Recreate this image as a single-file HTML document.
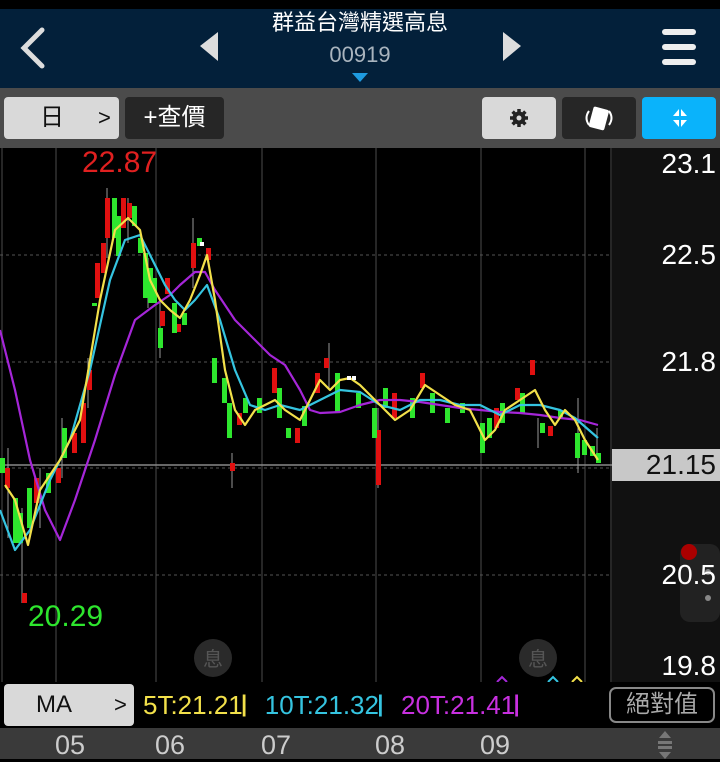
<!DOCTYPE html>
<html><head><meta charset="utf-8"><style>
*{margin:0;padding:0;box-sizing:border-box}
body{width:720px;height:759px;background:#000;overflow:hidden;font-family:"Liberation Sans","Noto Sans CJK TC",sans-serif;position:relative}
.abs{position:absolute}
</style></head><body>
<div class="abs" style="left:0;top:0;width:720px;height:9px;background:#000"></div>
<div class="abs" style="left:0;top:9px;width:720px;height:79px;background:#03203a"></div>
<svg class="abs" style="left:0;top:0" width="720" height="90">
<polyline points="42,30 24,48 42,66" fill="none" stroke="#ddd" stroke-width="5" stroke-linecap="round"/>
<polygon points="218,32 218,61 200,46" fill="#ddd"/>
<polygon points="503,32 503,61 521,46" fill="#ddd"/>
<rect x="662" y="29" width="34" height="6" rx="3" fill="#eee"/>
<rect x="662" y="44" width="34" height="6" rx="3" fill="#eee"/>
<rect x="662" y="59" width="34" height="6" rx="3" fill="#eee"/>
<polygon points="352,73 368,73 360,82" fill="#1e9be0"/>
</svg>
<div class="abs" style="left:0;top:9px;width:720px;text-align:center;font-size:22px;color:#fff;line-height:28px">群益台灣精選高息</div>
<div class="abs" style="left:0;top:41px;width:720px;text-align:center;font-size:22px;color:#a9b4be;line-height:28px">00919</div>
<div class="abs" style="left:0;top:88px;width:720px;height:60px;background:#4b4b4b"></div>
<div class="abs" style="left:4px;top:97px;width:115px;height:42px;background:#d9d9d9;border-radius:4px;font-size:24px;line-height:42px;color:#111"><span style="position:absolute;left:36px">日</span><span style="position:absolute;left:94px;font-size:22px">&gt;</span></div>
<div class="abs" style="left:125px;top:97px;width:99px;height:42px;background:#262626;border-radius:4px;font-size:24px;line-height:42px;color:#fff;text-align:center">+查價</div>
<div class="abs" style="left:482px;top:97px;width:74px;height:42px;background:#d9d9d9;border-radius:4px"></div>
<svg class="abs" style="left:482px;top:97px" width="74" height="42"><g fill="#222"><circle cx="37" cy="21" r="6.5"/><g stroke="#222" stroke-width="3.5"><line x1="37" y1="12" x2="37" y2="30"/><line x1="28" y1="21" x2="46" y2="21"/><line x1="30.6" y1="14.6" x2="43.4" y2="27.4"/><line x1="43.4" y1="14.6" x2="30.6" y2="27.4"/></g></g><circle cx="37" cy="21" r="2.5" fill="#d9d9d9"/></svg>
<div class="abs" style="left:562px;top:97px;width:74px;height:42px;background:#262626;border-radius:4px"></div>
<svg class="abs" style="left:562px;top:97px" width="74" height="42"><rect x="29" y="11" width="16" height="21" rx="2" fill="#fff" transform="rotate(15 37 21)"/><path d="M27 14 Q22 21 27 28" stroke="#fff" stroke-width="2" fill="none"/><path d="M47 14 Q52 21 47 28" stroke="#fff" stroke-width="2" fill="none"/></svg>
<div class="abs" style="left:642px;top:97px;width:74px;height:42px;background:#0ab3fb;border-radius:4px"></div>
<svg class="abs" style="left:642px;top:97px" width="74" height="42"><polygon points="31,19 37,12 37,19" fill="#fff"/><polygon points="39,12 45,19 39,19" fill="#fff"/><polygon points="31,23 37,23 37,30" fill="#fff"/><polygon points="39,23 45,23 39,30" fill="#fff"/></svg>
<!-- chart -->
<div class="abs" style="left:612px;top:148px;width:108px;height:534px;background:#111"></div>
<svg class="abs" style="left:0;top:148px" width="720" height="534">
<g stroke="#333" stroke-width="1.5">
<line x1="2" y1="0" x2="2" y2="534"/><line x1="56" y1="0" x2="56" y2="534"/><line x1="156" y1="0" x2="156" y2="534"/><line x1="262" y1="0" x2="262" y2="534"/><line x1="376" y1="0" x2="376" y2="534"/><line x1="481" y1="0" x2="481" y2="534"/><line x1="585" y1="0" x2="585" y2="534"/><line x1="611" y1="0" x2="611" y2="534"/>
</g>
<g stroke="#555" stroke-dasharray="3,3"><line x1="0" y1="107" x2="611" y2="107"/><line x1="0" y1="214" x2="611" y2="214"/><line x1="0" y1="427" x2="611" y2="427"/><line x1="0" y1="320" x2="611" y2="320"/></g>
<line x1="0" y1="317" x2="612" y2="317" stroke="#888" stroke-width="1.5"/>
<g stroke="#999" stroke-width="1">
<line x1="8" y1="300" x2="8" y2="390"/><line x1="22" y1="360" x2="22" y2="455"/><line x1="40" y1="320" x2="40" y2="380"/><line x1="62" y1="270" x2="62" y2="330"/><line x1="88" y1="210" x2="88" y2="260"/><line x1="107" y1="40" x2="107" y2="110"/><line x1="128" y1="50" x2="128" y2="95"/><line x1="148" y1="110" x2="148" y2="160"/><line x1="160" y1="150" x2="160" y2="210"/><line x1="193" y1="70" x2="193" y2="140"/><line x1="232" y1="305" x2="232" y2="340"/><line x1="329" y1="195" x2="329" y2="240"/><line x1="378" y1="260" x2="378" y2="340"/><line x1="538" y1="270" x2="538" y2="300"/><line x1="578" y1="250" x2="578" y2="325"/><line x1="597" y1="280" x2="597" y2="315"/>
</g>
<g fill="#e01010">
<rect x="5" y="320" width="5" height="20"/><rect x="34" y="330" width="5" height="25"/><rect x="56" y="320" width="5" height="15"/><rect x="72" y="285" width="5" height="20"/><rect x="81" y="255" width="5" height="40"/><rect x="87" y="222" width="5" height="20"/><rect x="95" y="115" width="5" height="35"/><rect x="101" y="95" width="5" height="30"/><rect x="105" y="50" width="5" height="40"/><rect x="121" y="50" width="5" height="30"/><rect x="127" y="55" width="5" height="15"/><rect x="160" y="163" width="5" height="15"/><rect x="165" y="130" width="5" height="16"/><rect x="176" y="176" width="5" height="8"/><rect x="191" y="95" width="5" height="25"/><rect x="206" y="100" width="5" height="12"/><rect x="230" y="315" width="5" height="8"/><rect x="237" y="265" width="5" height="12"/><rect x="272" y="220" width="5" height="25"/><rect x="295" y="280" width="5" height="15"/><rect x="315" y="225" width="5" height="20"/><rect x="324" y="210" width="5" height="10"/><rect x="376" y="282" width="5" height="55"/><rect x="392" y="245" width="5" height="25"/><rect x="420" y="225" width="5" height="15"/><rect x="494" y="260" width="5" height="20"/><rect x="515" y="240" width="5" height="12"/><rect x="530" y="212" width="5" height="15"/><rect x="548" y="278" width="5" height="10"/><rect x="22" y="445" width="5" height="10"/>
</g>
<g fill="#2ee62e">
<rect x="0" y="310" width="5" height="15"/><rect x="13" y="350" width="5" height="45"/><rect x="18" y="365" width="5" height="30"/><rect x="27" y="340" width="5" height="40"/><rect x="46" y="325" width="5" height="20"/><rect x="62" y="280" width="5" height="30"/><rect x="92" y="155" width="5" height="3"/><rect x="112" y="50" width="5" height="40"/><rect x="116" y="68" width="5" height="40"/><rect x="132" y="58" width="5" height="20"/><rect x="138" y="90" width="5" height="15"/><rect x="143" y="105" width="5" height="45"/><rect x="148" y="120" width="5" height="35"/><rect x="152" y="130" width="5" height="25"/><rect x="158" y="180" width="5" height="20"/><rect x="172" y="155" width="5" height="30"/><rect x="182" y="165" width="5" height="12"/><rect x="197" y="90" width="5" height="8"/><rect x="212" y="210" width="5" height="25"/><rect x="222" y="230" width="5" height="25"/><rect x="227" y="255" width="5" height="35"/><rect x="243" y="250" width="5" height="15"/><rect x="257" y="250" width="5" height="15"/><rect x="277" y="240" width="5" height="30"/><rect x="286" y="280" width="5" height="10"/><rect x="302" y="258" width="5" height="20"/><rect x="335" y="225" width="5" height="40"/><rect x="356" y="245" width="5" height="15"/><rect x="372" y="260" width="5" height="30"/><rect x="383" y="240" width="5" height="20"/><rect x="410" y="250" width="5" height="20"/><rect x="430" y="245" width="5" height="20"/><rect x="445" y="260" width="5" height="15"/><rect x="460" y="255" width="5" height="10"/><rect x="480" y="275" width="5" height="30"/><rect x="487" y="270" width="5" height="20"/><rect x="500" y="255" width="5" height="20"/><rect x="520" y="245" width="5" height="20"/><rect x="540" y="275" width="5" height="10"/><rect x="558" y="262" width="5" height="8"/><rect x="575" y="285" width="5" height="25"/><rect x="582" y="292" width="5" height="15"/><rect x="590" y="298" width="5" height="10"/><rect x="596" y="305" width="5" height="10"/>
</g>
<g fill="none" stroke-width="2.2" stroke-linejoin="round">
<polyline stroke="#a526d8" points="0,182 15,242 30,312 45,362 60,392 75,352 95,292 115,227 135,172 155,157 170,147 180,137 195,124 205,124 215,142 235,172 255,192 270,207 285,217 300,242 310,262 320,265 340,264 360,257 380,252 400,252 420,254 440,257 460,260 480,262 500,264 520,265 540,267 560,270 580,272 598,277"/>
<polyline stroke="#35c4e0" points="0,362 15,402 30,382 50,332 70,292 90,222 110,132 125,92 140,87 155,117 165,137 175,152 185,162 195,152 207,137 220,172 235,222 250,257 265,262 280,257 300,262 320,252 340,242 360,244 380,257 400,262 420,252 440,252 460,257 480,257 500,267 520,257 540,257 560,262 575,270 598,290"/>
<polyline stroke="#f2e04a" points="5,337 15,352 28,397 40,342 60,312 80,272 100,152 115,82 128,70 140,82 150,132 160,152 170,162 180,170 190,152 200,127 207,107 215,152 225,222 235,262 245,277 255,262 265,257 275,252 285,262 300,272 310,252 320,232 330,242 340,232 350,230 360,237 375,252 385,262 395,272 410,262 425,237 440,247 455,257 470,262 485,292 495,282 505,262 520,252 535,242 545,262 555,277 565,262 575,272 585,292 598,312"/>
</g>
<rect x="200" y="94" width="4" height="4" fill="#fff"/><rect x="347" y="228" width="4" height="4" fill="#fff"/><rect x="352" y="228" width="4" height="4" fill="#fff"/>
<circle cx="213" cy="510" r="19" fill="#2a2a2a"/><text x="213" y="518" font-size="20" fill="#555" text-anchor="middle" font-family="Noto Sans CJK TC,sans-serif">息</text>
<circle cx="538" cy="510" r="19" fill="#2a2a2a"/><text x="538" y="518" font-size="20" fill="#555" text-anchor="middle" font-family="Noto Sans CJK TC,sans-serif">息</text>
<polyline points="497,534 502,529 507,534" stroke="#a526d8" stroke-width="2" fill="none"/>
<polyline points="548,534 553,529 558,534" stroke="#35c4e0" stroke-width="2" fill="none"/>
<polyline points="572,534 577,529 582,534" stroke="#f2e04a" stroke-width="2" fill="none"/>
<rect x="680" y="396" width="40" height="78" rx="10" fill="#222"/>
<circle cx="689" cy="404" r="8" fill="#a00"/><circle cx="708" cy="424" r="3" fill="#888"/><circle cx="708" cy="450" r="3" fill="#888"/>
</svg>
<div class="abs" style="left:82px;top:146px;font-size:30px;color:#e02020">22.87</div>
<div class="abs" style="left:28px;top:600px;font-size:30px;color:#2ee62e">20.29</div>
<div class="abs" style="left:612px;top:148px;width:104px;text-align:right;font-size:28px;color:#fff;line-height:32px">23.1</div>
<div class="abs" style="left:612px;top:239px;width:104px;text-align:right;font-size:28px;color:#fff;line-height:32px">22.5</div>
<div class="abs" style="left:612px;top:346px;width:104px;text-align:right;font-size:28px;color:#fff;line-height:32px">21.8</div>
<div class="abs" style="left:612px;top:449px;width:108px;height:32px;background:#c8c8c8;text-align:right;padding-right:4px;font-size:28px;color:#111;line-height:32px">21.15</div>
<div class="abs" style="left:612px;top:559px;width:104px;text-align:right;font-size:28px;color:#fff;line-height:32px">20.5</div>
<div class="abs" style="left:612px;top:650px;width:104px;text-align:right;font-size:28px;color:#fff;line-height:32px">19.8</div>
<!-- legend -->
<div class="abs" style="left:0;top:682px;width:720px;height:46px;background:#000"></div>
<div class="abs" style="left:4px;top:684px;width:130px;height:42px;background:#d9d9d9;border-radius:4px;font-size:24px;line-height:42px;color:#111"><span style="position:absolute;left:32px">MA</span><span style="position:absolute;left:110px;font-size:22px">&gt;</span></div>
<div class="abs" style="left:143px;top:688px;font-size:26px;line-height:34px;white-space:nowrap"><span style="color:#f2e04a">5T:21.21</span><span style="color:#f2e04a;font-size:22px">&#x258F;</span><span style="color:#35c4e0">10T:21.32</span><span style="color:#35c4e0;font-size:22px">&#x258F;</span><span style="color:#c830e0">20T:21.41</span><span style="color:#c830e0;font-size:22px">&#x258F;</span></div>
<div class="abs" style="left:609px;top:687px;width:106px;height:36px;border:2px solid #888;border-radius:7px;color:#aaa;font-size:24px;line-height:32px;text-align:center">絕對值</div>
<div class="abs" style="left:0;top:728px;width:720px;height:31px;background:#3a3a3a"></div>
<div class="abs" style="left:0;top:728px;width:720px;height:31px;font-size:27px;color:#ccc;line-height:34px">
<span style="position:absolute;left:55px">05</span><span style="position:absolute;left:155px">06</span><span style="position:absolute;left:261px">07</span><span style="position:absolute;left:375px">08</span><span style="position:absolute;left:480px">09</span></div>
<svg class="abs" style="left:655px;top:730px" width="20" height="29"><polygon points="4,8 10,1 16,8" fill="#777"/><rect x="3" y="11" width="14" height="3" fill="#777"/><rect x="3" y="16" width="14" height="3" fill="#777"/><polygon points="4,22 16,22 10,29" fill="#777"/></svg>
</body></html>
